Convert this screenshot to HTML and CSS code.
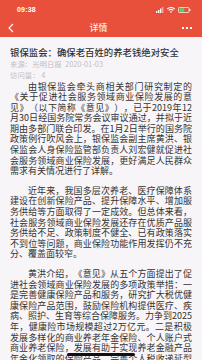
FILE: index.html
```html
<!DOCTYPE html>
<html lang="zh-CN">
<head>
<meta charset="utf-8">
<title>详情</title>
<link rel="stylesheet" href="styles.css">
</head>
<body>
<div class="phone">
  <header class="top">
    <div class="status">
      <span class="time">09:38</span>
      <span class="status-icons">
        <svg class="signal" width="8" height="6" viewBox="0 0 8 6"><rect x="0" y="4" width="1.4" height="2" fill="#fff"/><rect x="2" y="3" width="1.4" height="3" fill="#fff"/><rect x="4" y="1.5" width="1.4" height="4.5" fill="#fff"/><rect x="6" y="0" width="1.4" height="6" fill="#fff" opacity="0.5"/></svg>
        <svg class="wifi" width="8" height="6" viewBox="0 0 8 6"><path d="M0.3 2 Q4 -1 7.7 2" stroke="#fff" stroke-width="1.1" fill="none"/><path d="M1.7 3.4 Q4 1.4 6.3 3.4" stroke="#fff" stroke-width="1.1" fill="none"/><path d="M2.9 4.7 L4 6 L5.1 4.7 Q4 3.8 2.9 4.7Z" fill="#fff"/></svg>
        <svg class="battery" width="13" height="6" viewBox="0 0 13 6"><rect x="0.4" y="0.4" width="10.6" height="5.2" rx="1.2" fill="none" stroke="#fff" stroke-width="0.8"/><rect x="1.3" y="1.3" width="5" height="3.4" rx="0.5" fill="#4cd964"/><rect x="11.4" y="2" width="1" height="2" fill="#fff"/></svg>
      </span>
    </div>
    <div class="nav">
      <svg class="back" width="8" height="10" viewBox="0 0 8 10"><path d="M6 1 L2 5 L6 9" stroke="#fff" stroke-width="1.1" fill="none"/></svg>
      <span class="nav-title">详情</span>
      <span class="more"><i></i><i></i><i></i></span>
    </div>
  </header>
  <main class="article">
    <h1 class="title">银保监会：确保老百姓的养老钱绝对安全</h1>
    <div class="meta">来源：光明日报&nbsp; 2020-01-03</div>
    <div class="meta">访问量： 4</div>
    <p class="para">由银保监会牵头商相关部门研究制定的《关于促进社会服务领域商业保险发展的意见》（以下简称《意见》），已于2019年12月30日经国务院常务会议审议通过，并拟于近期由多部门联合印发。在1月2日举行的国务院政策例行吹风会上，银保监会副主席黄洪、银保监会人身保险监管部负责人刘宏健就促进社会服务领域商业保险发展，更好满足人民群众需求有关情况进行了详解。</p>
    <p class="para">近年来，我国多层次养老、医疗保障体系建设在创新保险产品、提升保障水平、增加服务供给等方面取得了一定成效。但总体来看，社会服务领域商业保险发展还存在优质产品服务供给不足、政策制度不健全、已有政策落实不到位等问题，商业保险功能作用发挥仍不充分、覆盖面较窄。</p>
    <p class="para">黄洪介绍，《意见》从五个方面提出了促进社会领域商业保险发展的多项政策举措：一是完善健康保险产品和服务，研究扩大税优健康保险产品范围，鼓励保险机构提供医疗、疾病、照护、生育等综合保障服务。力争到2025年，健康险市场规模超过2万亿元。二是积极发展多样化的商业养老年金保险、个人账户式商业养老保险，发展有助于实现养老金融产品年金化领取的保险产品，完善个人税收递延型商业养老保险。</p>
  </main>
  <div class="home-indicator"></div>
</div>
</body>
</html>
```
FILE: styles.css
```css
html, body {
  margin: 0;
  padding: 0;
}
body {
  width: 202px;
  height: 360px;
  overflow: hidden;
  background: #f8f5f8;
  font-family: "Noto Sans CJK SC", "Noto Sans", sans-serif;
  text-spacing-trim: space-all;
}
.phone {
  position: relative;
  width: 202px;
  height: 360px;
  overflow: hidden;
}
.top {
  background: #e8503c;
  color: #fff;
}
.status {
  height: 19px;
  display: flex;
  align-items: center;
  justify-content: space-between;
  padding: 0 11px 0 17px;
}
.time {
  font-family: "Liberation Sans", sans-serif;
  font-size: 7px;
  font-weight: bold;
  letter-spacing: 0.2px;
}
.status-icons {
  display: flex;
  align-items: center;
  gap: 3px;
}
.nav {
  height: 18px;
  display: flex;
  align-items: center;
  justify-content: space-between;
  padding: 0 7px 0 7px;
}
.nav-title {
  font-size: 9px;
  line-height: 12px;
}
.more {
  display: flex;
  gap: 2px;
  width: 12px;
  padding-right: 1px;
}
.more i {
  width: 2px;
  height: 2px;
  background: #fff;
  display: block;
}
.article {
  padding: 9px 10px 0 10px;
}
.title {
  margin: 0;
  font-size: 9.4px;
  line-height: 13px;
  font-weight: 500;
  color: #333;
  white-space: nowrap;
}
.meta {
  font-size: 7.4px;
  line-height: 10.5px;
  color: #c2bfc2;
}
.meta + .meta {
  margin-bottom: 1.5px;
}
.para {
  margin: 0 0 9px 0;
  font-size: 9px;
  line-height: 10.6px;
  color: #333;
  text-indent: 2em;
  text-align: justify;
  text-spacing-trim: space-all;
}
.home-indicator {
  position: absolute;
  left: 67px;
  top: 353px;
  width: 68px;
  height: 3px;
  border-radius: 2px;
  background: #111;
}
```
